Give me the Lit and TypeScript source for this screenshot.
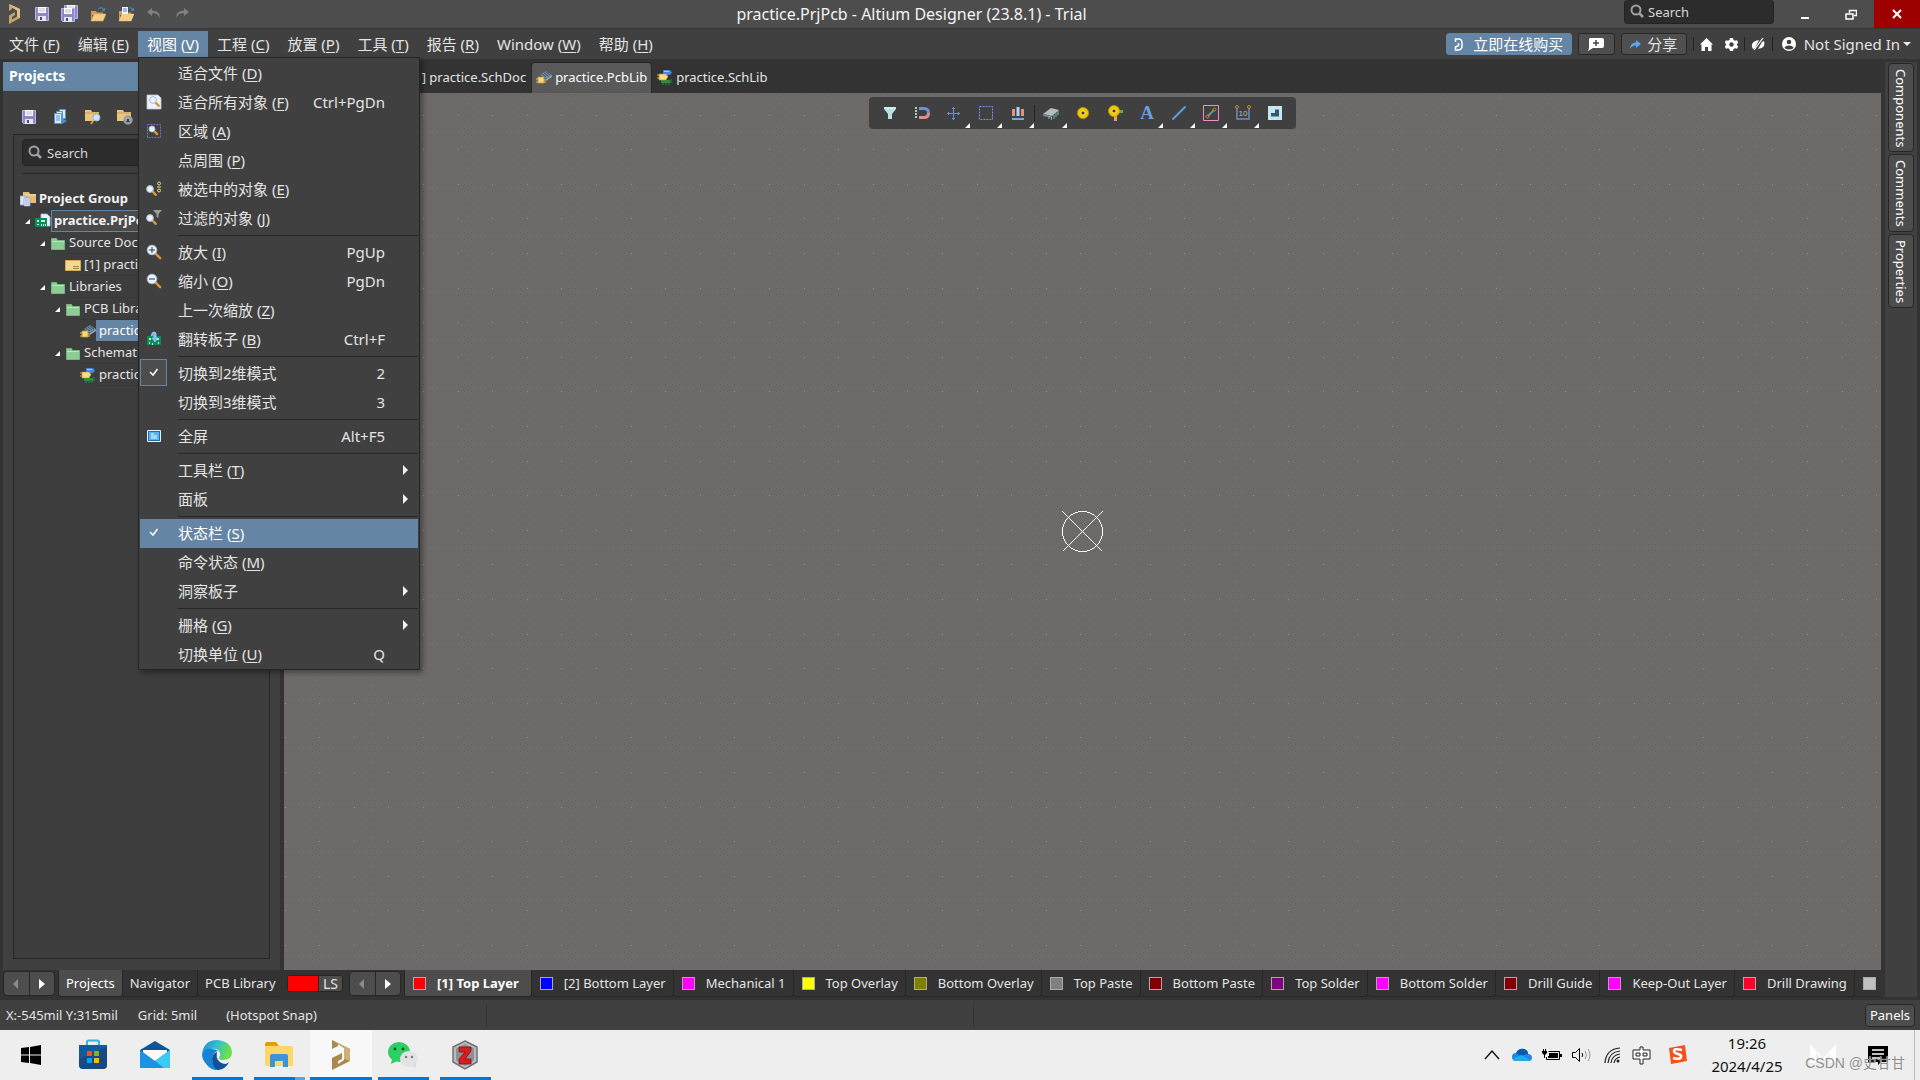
import { LitElement, html, css, svg, nothing, TemplateResult } from "lit";
import { customElement } from "lit/decorators.js";
import { classMap } from "lit/directives/class-map.js";
import { styleMap } from "lit/directives/style-map.js";

type Drawing = TemplateResult<2>;

const icon = (body: Drawing, w = 16, h = 16, box = `0 0 ${w} ${h}`) =>
  html`<svg width=${w} height=${h} viewBox=${box} aria-hidden="true">${body}</svg>`;

const lens = (x: number, y: number, r: number) => svg`
  <path d="M${x + r * 0.7} ${y + r * 0.7}l${r} ${r}" stroke="#d9963a" stroke-width="2.4" stroke-linecap="round"/>
  <circle cx=${x} cy=${y} r=${r} fill="#e9f4fd" stroke="#a9bccf" stroke-width="1"/>`;

const disk = (x: number, y: number) => svg`
  <g transform="translate(${x} ${y})">
    <path d="M.5 .5h13v13h-12l-1-1z" fill="#8d88c9" stroke="#b9b6e4"/>
    <path d="M3 0h8v6H3z" fill="#fff"/>
    <path d="M4 2h6M4 4h6" stroke="#b8bcc8"/>
    <path d="M3 9h8v5H3z" fill="#e6e6f4"/><path d="M5 10h2v3H5z" fill="#4b4787"/>
  </g>`;

const folder = svg`<path d="M1.500 3.500h5l1 2h7v9h-13z" fill="#8fcb94" stroke="#74b57a"/><path d="M2 6.500h12" stroke="#b9e6bc"/>`;
const openFolder = svg`
  <path d="M1 5h5l1 1.500h6V9H1z" fill="#c9a060"/><path d="M1 15V5h1v10z" fill="#c9a060"/>
  <path d="M4 8h12l-3 7H1z" fill="#f4cd85" stroke="#d8ac62" stroke-width=".6"/>`;
const closedFolder = svg`<path d="M0 1h6l1 2h7v9H0z" fill="#eac57f"/><path d="M0 4h14" stroke="#c99f56"/>`;

const goldMark = svg`
  <path d="M2 1v7l3-2V4.500l5 3v6l-5 3V14l3-2V9L2 12.500V21l11-6V6z" fill="#c3a469"/>
  <path d="M2 1l11 5v9L10 13.500v-6L5 4.500z" fill="#d9c08c"/>`;

const pcbLib = svg`
  <path d="M4 6l6-4 6 4-6 4z" fill="#6f8aa3"/><path d="M4 6l6 4v2L4 8z" fill="#40566a"/><path d="M10 10l6-4v2l-6 4z" fill="#8aa2b8"/>
  <path d="M6 5l4 3M8 4l4 3M10 3l4 3" stroke="#34485a" stroke-width=".8"/>
  <path d="M2 8h6v6H2z" fill="#f6d77a" stroke="#c29a32" stroke-width=".8"/>
  <path d="M0 10h2M0 13h2M8 11h2M8 13h2" stroke="#e3bd4e"/>`;
const schLib = svg`
  <path d="M6 1h7l2 2.500L13 6H6z" fill="#3f86e8"/><path d="M7 2h5v1H7z" fill="#a9ccff"/>
  <path d="M4 11h9v3H4z" fill="#2e8b3d"/><path d="M6 13v3M9 13v3M12 13v3M13 11h2M13 13h2" stroke="#2e8b3d"/>
  <path d="M2 5h7l2 2.500L9 11H2z" fill="#f9dc86" stroke="#b98f2c" stroke-width=".6"/>
  <path d="M0 6h2M0 9h2" stroke="#dba63a"/>`;
const schDoc = svg`<path d="M.5 3.500h15v10H.5z" fill="#f2d98b" stroke="#cfae57"/><path d="M8 9h6v1H8zM8 11h6v1H8z" fill="#a5853c"/>`;
const project = svg`
  <path d="M6 1h6l3 3v9H6z" fill="#eef1fb" stroke="#b5bbd6" stroke-width=".8"/>
  <path d="M0 5h12v9H0z" fill="#0f8a5c"/>
  <path d="M2 7h2v2H2zM2 11h2v1H2zM6 7h4v2H6zM6 11h1v2H6zM8 11h1v2H8zM10 11h1v2h-1z" fill="#bff0d6"/>`;
const projectGroup = svg`
  <path d="M3 1h6l1 2h6v9H3z" fill="#e5bd76"/><path d="M3 4h13" stroke="#f6dca6"/>
  <path d="M0 5h6v9H0z" fill="#dfe6f8" stroke="#8e9cc8" stroke-width=".8"/>
  <path d="M4 7h6v8H4z" fill="#f2f5ff" stroke="#8e9cc8" stroke-width=".8"/>
  <path d="M5 9h4M5 11h4M5 13h4" stroke="#7f90c4" stroke-width=".8"/>`;

const quickIcons: [string, unknown][] = [
  ["Altium", icon(goldMark, 15, 22)],
  ["Save", icon(disk(1, 1))],
  ["Save All", icon(svg`${disk(3, 0)}${disk(0, 3)}`, 18, 18)],
  ["Open", icon(svg`${openFolder}<path d="M8 3q4-3 6 1m1-2l-1 3-2-1" fill="none" stroke="#4a90c8"/>`)],
  ["Open Project", icon(svg`${openFolder}<path d="M4 1h6v7H4z" fill="#f1f5ff"/><path d="M5 3h4M5 5h4" stroke="#5a74b5"/><path d="M11 2q3-1 4 2m1-2l-1 3-2-1" fill="none" stroke="#4a90c8"/><path d="M4 8h12l-3 7H1z" fill="#f4cd85"/>`)],
  ["Undo", icon(svg`<path d="M6 2L1 6l5 4V7.500q6-1 7.500 5Q15 5 6 4.500z" fill="#808080"/>`)],
  ["Redo", icon(svg`<path d="M10 2l5 4-5 4V7.500q-6-1-7.500 5Q1 5 10 4.500z" fill="#808080"/>`)],
];

interface Entry { text?: string; key?: string; short?: string; icon?: unknown; check?: boolean; boxed?: boolean; sub?: boolean; hot?: boolean }

const viewMenu: Entry[][] = [
  [
    { text: "适合文件", key: "D" },
    { text: "适合所有对象", key: "F", short: "Ctrl+PgDn", icon: icon(svg`<path d="M1 1h11l3 3v11H1z" fill="#eef3fb" stroke="#b8c4dd" stroke-width=".8"/>${lens(7, 6, 3.4)}`) },
    { text: "区域", key: "A", icon: icon(svg`<path d="M1.500 1.500h13v13h-13z" fill="none" stroke="#6c78c8" stroke-dasharray="2 1"/>${lens(6, 6, 3)}`) },
    { text: "点周围", key: "P" },
    { text: "被选中的对象", key: "E", icon: icon(svg`${lens(4, 8, 3.4)}<g fill="none" stroke="#e6e37a"><circle cx="13" cy="2.500" r="1.500"/><circle cx="13" cy="9.500" r="1.500"/><path d="M11 6h4"/></g>`) },
    { text: "过滤的对象", key: "J", icon: icon(svg`${lens(4, 8, 3.4)}<path d="M7 0h9l-3.500 4v4l-2-1V4z" fill="#9b9b9b"/>`) },
  ],
  [
    { text: "放大", key: "I", short: "PgUp", icon: icon(svg`${lens(6, 6, 4.8)}<path d="M3 6h6M6 3v6" stroke="#333"/>`) },
    { text: "缩小", key: "O", short: "PgDn", icon: icon(svg`${lens(6, 6, 4.8)}<path d="M3 6h6" stroke="#333"/>`) },
    { text: "上一次缩放", key: "Z" },
    { text: "翻转板子", key: "B", short: "Ctrl+F", icon: icon(svg`<path d="M1 5h14v9H1z" fill="#0f8a5c"/><path d="M3 7h2v2H3zM11 7h2v2h-2zM3 11h1v2H3zM6 12h1v2H6zM12 11h1v2h-1z" fill="#bff0d6"/><path d="M5 5q1-5 4-4 2 1 1 6h2l-3 4-3-4h2q0-4-3-2z" fill="#7db8f0" stroke="#c3e0ff" stroke-width=".5"/>`) },
  ],
  [{ text: "切换到2维模式", short: "2", check: true, boxed: true }, { text: "切换到3维模式", short: "3" }],
  [{ text: "全屏", short: "Alt+F5", icon: icon(svg`<rect x="1" y="2" width="14" height="12" rx="1" fill="#e8f2fa"/><rect x="2.500" y="3.500" width="11" height="9" fill="#58b4f0" stroke="#1f6fb0"/><path d="M5 6h3M5 8h6M5 10h6" stroke="#e8f6ff"/>`) }],
  [{ text: "工具栏", key: "T", sub: true }, { text: "面板", sub: true }],
  [{ text: "状态栏", key: "S", check: true, hot: true }, { text: "命令状态", key: "M" }, { text: "洞察板子", sub: true }],
  [{ text: "栅格", key: "G", sub: true }, { text: "切换单位", key: "U", short: "Q" }],
];

const menuBar: [string, string][] = [
  ["文件", "F"], ["编辑", "E"], ["视图", "V"], ["工程", "C"], ["放置", "P"],
  ["工具", "T"], ["报告", "R"], ["Window", "W"], ["帮助", "H"],
];

interface Node { level: number; label: string; art: Drawing; open?: boolean; state?: string }
const tree: Node[] = [
  { level: 0, label: "Project Group", art: projectGroup, state: "strong" },
  { level: 1, label: "practice.PrjPcb", art: project, open: true, state: "strong focus" },
  { level: 2, label: "Source Documents", art: folder, open: true },
  { level: 3, label: "[1] practice.SchDoc", art: schDoc },
  { level: 2, label: "Libraries", art: folder, open: true },
  { level: 3, label: "PCB Library Documents", art: folder, open: true },
  { level: 4, label: "practice.PcbLib", art: pcbLib, state: "picked" },
  { level: 3, label: "Schematic Library Documents", art: folder, open: true },
  { level: 4, label: "practice.SchLib", art: schLib },
];

const layers: [string, string][] = [
  ["[1] Top Layer", "#ff0000"], ["[2] Bottom Layer", "#0000ff"], ["Mechanical 1", "#ff00ff"],
  ["Top Overlay", "#ffff00"], ["Bottom Overlay", "#808000"], ["Top Paste", "#808080"],
  ["Bottom Paste", "#800000"], ["Top Solder", "#800080"], ["Bottom Solder", "#ff00ff"],
  ["Drill Guide", "#800000"], ["Keep-Out Layer", "#ff00ff"], ["Drill Drawing", "#ff002a"], ["", "#c0c0c0"],
];

const ring = (x: number, y: number) => svg`<circle cx=${x} cy=${y} r="5.500" fill="#f2c800" stroke="#c79a00" stroke-width=".8"/><circle cx=${x} cy=${y} r="2" fill="#3a3a2a" stroke="#fff3a0" stroke-width=".8"/>`;
const activeTools: ([string, unknown, boolean] | null)[] = [
  ["Filter", icon(svg`<path d="M2 2h12v2L10 9v5H6V9L2 4z" fill="#b9dfe6"/><path d="M3 3h10" stroke="#e5f7fa"/>`), false],
  ["Snapping", icon(svg`<path d="M5 3.500h5q4.500 0 4.500 4.500" fill="none" stroke="#6e8fdc" stroke-width="3"/><path d="M14.500 8q0 4.500-4.500 4.500H5" fill="none" stroke="#ea8a90" stroke-width="3"/><path d="M1 3h2M1 6h2M1 9h2M1 12h2" stroke="#a9cdd4" stroke-width="2"/>`), false],
  ["Move", icon(svg`<path d="M7.500 2v13M1 8.500h13" stroke="#6b8ae0"/><path d="M6 3.500h3M6 13.500h3M2.500 7v3M12.500 7v3" stroke="#6b8ae0"/>`), true],
  ["Select", icon(svg`<path d="M1.500 1.500h13v13h-13z" fill="none" stroke="#7390ee" stroke-dasharray="2 1"/>`), true],
  ["Align", icon(svg`<path d="M2 4h3v7H2zM11 4h3v7h-3z" fill="#ee8a8a"/><path d="M6.500 2h3v9h-3z" fill="#a8d8f4"/><path d="M2 13h12v2H2z" fill="#7fa6dc"/>`), true],
  null,
  ["Component", icon(svg`<path d="M0 9l8-6 8 2-7 6z" fill="#b5bcc0"/><path d="M0 9l9 2v2l-9-2z" fill="#7d8488"/><path d="M6 11v3M8.500 12v3M11 10v4M13 8v4M15 6v4" stroke="#7fb6c4"/>`), true],
  ["Pad", icon(ring(8, 8)), false],
  ["Via", icon(svg`<path d="M7 11h3v5H7z" fill="#e8a05a"/><path d="M11 5h5v3h-5z" fill="#4fb53e"/>${ring(7, 6)}`), false],
  ["String", html`<span class="letter">A</span>`, true],
  ["Line", icon(svg`<path d="M2 14L14 2" stroke="#5e9ce0" stroke-width="2" stroke-linecap="round"/>`), true],
  ["Rules", icon(svg`<path d="M.5 .5h15v15H.5z" fill="none" stroke="#f08ad4"/><path d="M5 11l6-6" stroke="#6f86b8" stroke-width="2"/><g fill="none" stroke="#c88a1e"><circle cx="4.500" cy="11.500" r="1.500"/><circle cx="11.500" cy="4.500" r="1.500"/></g>`), true],
  ["Dimension", icon(svg`<path d="M2 3v11h12V3" fill="none" stroke="#6a8bc8" stroke-width="1.500"/><g fill="none" stroke="#c88a1e"><circle cx="2" cy="2" r="1.500"/><circle cx="14" cy="2" r="1.500"/></g><text x="8" y="11" text-anchor="middle" font-family="Liberation Sans, sans-serif" font-size="8" fill="#bbb">10</text>`), true],
  ["Polygon", icon(svg`<path d="M1 1h14v14H1z" fill="#c5e6f2"/><path d="M4 4.500h8v7H4z" fill="#35586c"/><path d="M4 4h4v4H4z" fill="#c5e6f2"/>`), false],
];

const taskIcons: [string, string, unknown][] = [
  ["Start", "", icon(svg`<path d="M0 3l8-1v7.500H0zM9 1.900L20 0v9.500H9zM0 10.500h8V18l-8-1zM9 10.500h11V20L9 18.100z" fill="#000"/>`, 20, 20)],
  ["Store", "", icon(svg`<path d="M9 6V3q0-1.500 1.500-1.500h9Q21 1.500 21 3v3" fill="none" stroke="#2fb4ee" stroke-width="2"/><path d="M1 6h28v20q0 4-4 4H5q-4 0-4-4z" fill="#135a9c"/><path d="M1 20l28-12v18q0 4-4 4H5q-4 0-4-4z" fill="#1d3d6e" opacity=".55"/><path d="M9 12h5v5H9z" fill="#f25022"/><path d="M16 12h5v5h-5z" fill="#7fba00"/><path d="M9 19h5v5H9z" fill="#00a4ef"/><path d="M16 19h5v5h-5z" fill="#ffb900"/>`, 30, 32)],
  ["Mail", "", icon(svg`<path d="M0 10L15 1l15 9v4H0z" fill="#0f5697"/><path d="M3 10h24v10H3z" fill="#fafafa"/><path d="M0 10l15 11L30 10v18H0z" fill="#1b93e0"/><path d="M30 10L15 21l9 7h6z" fill="#3ccaf4"/>`, 30, 30)],
  ["Edge", "run", icon(svg`
    <defs><linearGradient id="e1" x1="0" y1="0" x2="1" y2=".3"><stop offset="0" stop-color="#1b86d6"/><stop offset=".5" stop-color="#2fbfd0"/><stop offset="1" stop-color="#6ee04a"/></linearGradient></defs>
    <path d="M0 14Q2 0 15 0q14 1 15 12 0 8-9 8-4 0-4-2 2-3 1-5-2-5-8-4Q3 9 0 14z" fill="url(#e1)"/>
    <path d="M0 14q3-6 9-5 5 0 7 2-5 1-6 7 0 8 8 12-8 1-13-5-5-5-5-11z" fill="#1583d6"/>
    <path d="M10 18q1-5 5-6-1 5 1 8 3 4 8 4l3-2q-3 7-11 8-6-3-6-12z" fill="#12519a"/>`, 30, 30)],
  ["Explorer", "run more", icon(svg`<path d="M0 2q0-2 2-2h9l3 4H0z" fill="#e0a000"/><path d="M0 4h26q2 0 2 2v18H2q-2 0-2-2z" fill="#ffd766"/><path d="M5 14q0-2 2-2h14q2 0 2 2v11h-5v-6h-8v6H5z" fill="#3f92d8"/>`, 28, 26)],
  ["Altium Designer", "run front", icon(svg`<path d="M1 0v9l6-3V4l6 4v12l-6 4v-3l4-2v-6L1 18v12l18-9V9z" fill="#a8894e"/><path d="M1 0l18 9v12l-6-2V8L7 4z" fill="#cdb078"/>`, 20, 30)],
  ["WeChat", "run", icon(svg`<ellipse cx="11" cy="10" rx="11" ry="10" fill="#2bcf62"/><path d="M4 17l-1 5 6-3z" fill="#2bcf62"/><circle cx="7" cy="7" r="1.400" fill="#14532b"/><circle cx="15" cy="7" r="1.400" fill="#14532b"/><ellipse cx="21" cy="17" rx="9" ry="8" fill="#e3e3e4"/><path d="M24 23l4 3v-5z" fill="#dadada"/><circle cx="18" cy="15" r="1.200" fill="#777"/><circle cx="24" cy="15" r="1.200" fill="#777"/>`, 30, 27)],
  ["Z", "run", icon(svg`<path d="M13 1l12 6v15l-12 7-12-7V7z" fill="#b9bcbe" stroke="#6d7275" stroke-width="1.500"/><path d="M13 4l9 4.500v12L13 26l-9-5.500v-12z" fill="#8c9193"/><path d="M7 7h12v4l-6 8h6v5H7v-5l6-7H7z" fill="#d61e1e" stroke="#8b0d0d" stroke-width=".8"/>`, 26, 30)],
];

const trayIcons: [string, unknown][] = [
  ["Show hidden icons", icon(svg`<path d="M1 12l7-8 7 8" fill="none" stroke="#111" stroke-width="1.400"/>`)],
  ["OneDrive", icon(svg`<path d="M4 13q-4 0-4-4 0-4 4-4 3-5 8-4 4 1 4 5 4 0 4 4 0 3-4 3z" fill="#1b8ce0"/><path d="M4 5q3-5 8-4 4 1 4 5l-8 2z" fill="#0a5bb0"/><path d="M1 11l8-4 9 5-2 1H4z" fill="#28a8ea"/>`, 20, 14)],
  ["Battery", icon(svg`<path d="M6.500 3.500h11v8h-13V9" fill="none" stroke="#000"/><path d="M7 5h9v5H6V8h1zM18 6h2v3h-2zM0 3h5v2L3 7v3H2V7L0 5zM1 1h1v2H1zM3 1h1v2H3z" fill="#000"/>`, 20, 14)],
  ["Volume", icon(svg`<path d="M.5 5.500h3l4-4v13l-4-4h-3z" fill="none" stroke="#000"/><path d="M10 6q1.500 2 0 4" fill="none" stroke="#000"/><path d="M13 4q3 4 0 8M16 2q4 6 0 12" fill="none" stroke="#999"/>`, 20, 16)],
  ["Network", icon(svg`<g fill="none" stroke="#222" stroke-width="1.200"><path d="M1 16Q2 2 16 1M4 16Q5 5 16 4M7 16Q8 8 16 7M10 16q1-5 6-6"/></g><circle cx="14" cy="14" r="1.500" fill="#222"/>`, 17, 17)],
  ["Input method", icon(svg`<path d="M8 1h3v3h7v9h-7v5H8v-5H1V4h7z" fill="#fff" stroke="#222"/><path d="M4 7h4v3H4zM11 7h4v3h-4z" fill="#eee" stroke="#222"/>`, 21, 19)],
];

/* One repeat of the grid: 25 fine steps, every fifth one bright. */
const TILE = 173;
const STEPS = 25;
const dots = (major: boolean) => {
  let d = "";
  for (let i = 0; i < STEPS; i++)
    for (let j = 0; j < STEPS; j++)
      if ((i % 5 === 0 && j % 5 === 0) === major)
        d += `M${Math.floor((i * TILE) / STEPS)} ${Math.floor((j * TILE) / STEPS)}h1v1h-1z`;
  return d;
};

@customElement("app-root")
export class AppRoot extends LitElement {
  static styles = css`
    :host { display: block; font-family: "Noto Sans", "Noto Sans CJK SC", sans-serif; font-size: 13px; line-height: 20px; color: #e4e4e4; }
    * { box-sizing: border-box; }
    button, input { font: inherit; color: inherit; border: 0; background: none; padding: 0; margin: 0; }
    button { display: flex; align-items: center; justify-content: center; white-space: nowrap; }
    svg { display: block; flex: none; }
    a { color: inherit; text-decoration: none; }
    .window { min-height: 100vh; display: flex; flex-direction: column; background: #333; }

    .titlebar { height: 29px; display: flex; background: #4d4d4d; border-bottom: 1px solid #363636; }
    .quick { display: flex; padding: 0 3px 0 0; }
    .quick button { width: 28px; }
    .title { flex: 1; margin: 0; text-align: center; font-size: 16px; font-weight: 400; line-height: 28px; color: #f4f4f4; }
    .find { display: flex; align-items: center; gap: 3px; background: #2c2c2c; border: 1px solid #232323; border-radius: 4px; }
    .find input { flex: 1; min-width: 0; outline: 0; }
    .find input::placeholder { color: #d8d8d8; opacity: 1; }
    .titlebar .find { width: 150px; height: 24px; padding: 0 5px; border-top: 0; margin-right: 8px; }
    .titlebar .win { width: 46px; height: 28px; }
    .titlebar .close { background: #9e0000; }

    .menubar { height: 30px; display: flex; align-items: center; background: #404040; font-size: 15px; padding-right: 9px; }
    .menus { display: flex; flex: 1; }
    .menu { position: relative; }
    .menu > button { height: 26px; padding: 0 9px; }
    .menu.on > button { background: #6485a4; color: #fff; }
    u { text-underline-offset: 2px; text-decoration-thickness: 1px; }
    .dropdown { position: absolute; z-index: 5; top: 26px; left: 0; width: 282px; background: #404040; border: 1px solid #262626; padding: 1px 1px 0; box-shadow: 3px 3px 5px rgba(0, 0, 0, .35); }
    .group + .group { padding-top: 5px; background: linear-gradient(#262626, #262626) 38px 2px / 100% 1px no-repeat; }
    .entry { display: flex; width: 100%; height: 29px; padding-bottom: 2px; justify-content: flex-start; }
    .entry.hot { background: #6485a4; color: #fff; }
    .mark { width: 27px; height: 27px; margin-right: 11px; display: flex; align-items: center; justify-content: center; border: 1px solid transparent; }
    .mark.boxed { border-color: #6485a4; background: #4d4d4d; }
    .entry .text { flex: 1; text-align: left; }
    .entry .short { padding-right: 33px; }
    .entry .arrow { padding-right: 9px; }

    .account { display: flex; align-items: center; }
    .chip { height: 22px; border-radius: 3px; border: 1px solid #262626; background: #4f4f4f; margin-right: 6px; gap: 6px; }
    .buy { width: 126px; background: #6485a4; border-color: #6485a4; color: #fff; gap: 9px; }
    .note { width: 37px; }
    .share { width: 66px; }
    .bar { width: 1px; height: 14px; background: #222; }
    .tool { display: flex; align-items: center; justify-content: center; width: 25px; height: 22px; }
    .tool.wide { width: 27px; }
    .user { gap: 8px; padding-left: 9px; }
    .user .down { margin-left: -5px; }

    .work { flex: 1; display: grid; grid-template-columns: 277px minmax(0, 1fr) 32px; column-gap: 4px; padding: 3px 3px 0 3px; }
    .panel { background: #404040; display: flex; flex-direction: column; min-width: 0; overflow: hidden; }
    .panel h2 { margin: 0; padding-left: 6px; height: 29px; background: #6485a4; color: #fff; font-size: 14px; line-height: 28px; }
    .tools { display: flex; height: 43px; padding: 10px 0 0 10px; }
    .tools button { width: 32px; height: 32px; }
    .tree { flex: 1; margin: 0 10px 11px 10px; border: 1px solid #262626; background: #3d3d3d; padding: 4px 8px; }
    .tree .find { height: 27px; padding: 0 5px; gap: 4px; margin-bottom: 7px; }
    .rule { height: 1px; background: #262626; margin-bottom: 14px; }
    .tree ul { list-style: none; margin: 0 -8px 0 -2px; padding: 0; }
    .tree li { display: flex; align-items: center; height: 22px; white-space: nowrap; }
    .caret { width: 15px; display: flex; justify-content: center; }
    .leaf { flex: 1; height: 22px; padding: 0 3px; border-bottom: 1px solid #383838; }
    .strong { font-weight: 700; color: #f2f2f2; }
    .focus { border: 1px solid #6485a4; background: #4a4a4a; line-height: 18px; padding: 0 2px; }
    .picked { background: #6485a4; color: #fff; }
    .i2 { width: 15px; }
    .i3 { width: 30px; }
    .i4 { width: 45px; }
    .top { margin-left: -15px; }

    .editor { display: flex; flex-direction: column; min-width: 0; }
    .docs { display: flex; height: 31px; padding-left: 102px; }
    .doc { gap: 3px; padding: 0 4px 2px; border: 1px solid transparent; border-bottom: 0; border-radius: 4px 4px 0 0; }
    .doc.on { background: #595959; border-color: #262626; color: #fff; }
    .canvas { flex: 1; position: relative; background: #6e6a69; display: flex; flex-direction: column; align-items: center; padding-top: 4px; }
    .grid { position: absolute; inset: 0; width: 100%; height: 100%; }
    .origin { position: absolute; inset: 0; margin: auto; }
    .active { position: relative; display: flex; align-items: center; height: 32px; padding: 0 5px; background: #404040; border-radius: 4px; }
    .active button { position: relative; width: 32px; height: 32px; }
    .active .more::after { content: ""; position: absolute; right: 0; bottom: 1px; border: solid transparent; border-width: 0 0 5px 5px; border-bottom-color: #fff; }
    .active .bar { height: 16px; }
    .letter { font-family: "Liberation Serif", serif; font-weight: 700; font-size: 19px; line-height: 24px; color: #6aa0dc; }

    .rail { background: #404040; display: flex; flex-direction: column; align-items: center; gap: 2px; padding-top: 1px; }
    .rail button { writing-mode: vertical-rl; width: 26px; padding: 5px 0 4px; border: 1px solid #262626; border-radius: 4px; background: #4d4d4d; color: #fff; }

    .strip { display: grid; grid-template-columns: 277px minmax(0, 1fr) 32px; column-gap: 4px; padding: 0 3px; height: 30px; }
    .strip .end { background: #404040; margin-bottom: 3px; }
    .set { display: flex; align-items: flex-start; overflow: hidden; }
    .pair { display: flex; flex: none; width: 52px; height: 25px; margin: 1px 3px 0 0; background: #4d4d4d; border: 1px solid #262626; border-radius: 4px; }
    .pair button { flex: 1; }
    .pair button + button { border-left: 1px solid #262626; }
    .tab { flex: none; height: 27px; padding: 0 7px; border: 1px solid #262626; border-top: 0; border-left-width: 0; border-radius: 0 0 3px 3px; }
    .tab.on { background: #4d4d4d; color: #fff; border-left-width: 1px; }
    .layer { gap: 11px; padding: 0 7px 0 8px; }
    .layer.on { font-weight: 700; padding-right: 12px; }
    .swatch { width: 13px; height: 13px; border: 1px solid #aaa; }
    .current { display: flex; flex: none; width: 56px; height: 17px; margin: 5px 6px 0 3px; border: 1px solid #262626; border-radius: 3px; background: #4d4d4d; }
    .current i { width: 31px; background: #f00; border-right: 1px solid #262626; }
    .current button { flex: 1; font-size: 14px; }

    .status { height: 30px; display: flex; align-items: center; background: #404040; padding: 0 5px 0 0; }
    .status span { margin-right: 20px; }
    .status .snap { margin-left: 9px; }
    .fill { flex: 1; }
    .cell { width: 487px; height: 24px; display: flex; align-items: center; border-right: 1px solid #333; padding-left: 6px; }
    .panels { width: 50px; height: 23px; border: 1px solid #262626; border-radius: 4px; background: #4d4d4d; color: #fff; }

    .taskbar { position: relative; height: 50px; display: flex; background: #eee; color: #111; }
    .app { position: relative; width: 62px; }
    .app.front { background: #f8f8f8; }
    .app.run::after { content: ""; position: absolute; left: 6px; right: 5px; bottom: 0; height: 3px; background: #0078d7; }
    .app.front::after { left: 0; right: 0; }
    .app.more::after { background: linear-gradient(90deg, #0078d7 41px, #5aa7e6 41px); }
    .tray { margin-left: auto; display: flex; margin-right: 5px; padding-right: 7px; border-right: 1px solid #bbb; }
    .tray button { width: 30px; }
    .tray .sogou { width: 40px; }
    .tray .clock { width: 100px; flex-direction: column; line-height: 23px; font-size: 15px; }
    .tray .maker { width: 52px; padding-bottom: 2px; }
    .tray .news { width: 58px; }
    .watermark { position: absolute; right: 15px; bottom: 6px; font-family: "Liberation Sans", "Noto Sans CJK SC", sans-serif; font-size: 14px; line-height: 22px; color: #8d8d8d; text-shadow: 0 0 1px #fff; }
  `;

  private label(text: string, key?: string) {
    return html`${text}${key ? html` (<u>${key}</u>)` : nothing}`;
  }

  private search(id: string) {
    return html`<label class="find" for=${id}>
      ${icon(svg`<circle cx="6" cy="6" r="4.500" fill="none" stroke="#a0a0a0" stroke-width="2"/><path d="M9.500 9.500L13 13" stroke="#a0a0a0" stroke-width="2.500"/>`, 15, 15)}
      <input id=${id} type="text" placeholder="Search" aria-label="Search" />
    </label>`;
  }

  private entry(e: Entry) {
    return html`<button class=${classMap({ entry: true, hot: !!e.hot })} role="menuitem">
      <span class=${classMap({ mark: true, boxed: !!e.boxed })}>
        ${e.check ? icon(svg`<path d="M1 4l3 3 4.500-6" fill="none" stroke="#fff" stroke-width="1.500"/>`, 10, 9) : e.icon ?? nothing}
      </span>
      <span class="text">${this.label(e.text ?? "", e.key)}</span>
      ${e.short ? html`<span class="short">${e.short}</span>` : nothing}
      ${e.sub ? html`<span class="arrow">${icon(svg`<path d="M0 0l5 5-5 5z" fill="#f2f2f2"/>`, 6, 10)}</span>` : nothing}
    </button>`;
  }

  private pair() {
    return html`<div class="pair">
      <button aria-label="Previous">${icon(svg`<path d="M5 0v10L0 5z" fill="#8a8a8a"/>`, 6, 10)}</button>
      <button aria-label="Next">${icon(svg`<path d="M0 0l6 5-6 5z" fill="#fff"/>`, 6, 10)}</button>
    </div>`;
  }

  private header() {
    return html`
      <header class="titlebar">
        <div class="quick">${quickIcons.map(([name, art]) => html`<button aria-label=${name}>${art}</button>`)}</div>
        <h1 class="title">practice.PrjPcb - Altium Designer (23.8.1) - Trial</h1>
        ${this.search("find-all")}
        <button class="win" aria-label="Minimize">${icon(svg`<path d="M0 9h8v2H0z" fill="#fff"/>`, 9, 12)}</button>
        <button class="win" aria-label="Restore">${icon(svg`<path d="M4.500 4V1.500h7v5H9" fill="none" stroke="#fff" stroke-width="1.500"/><path d="M1 5h7v5H1z" fill="none" stroke="#fff" stroke-width="1.500"/>`, 12, 11)}</button>
        <button class="win close" aria-label="Close">${icon(svg`<path d="M1 1l8 8M9 1L1 9" stroke="#fff" stroke-width="2"/>`, 10, 10)}</button>
      </header>
      <nav class="menubar">
        <div class="menus">
          ${menuBar.map(([text, key]) => html`<div class=${classMap({ menu: true, on: key === "V" })}>
            <button aria-haspopup="menu"><span>${this.label(text, key)}</span></button>
            ${key === "V" ? html`<div class="dropdown" role="menu">
              ${viewMenu.map((g) => html`<div class="group" role="group">${g.map((e) => this.entry(e))}</div>`)}
            </div>` : nothing}
          </div>`)}
        </div>
        <div class="account">
          <button class="chip buy">${icon(svg`<path d="M1.500 4V1h3q3.500 0 3.500 4v3q0 4-4 4H1.500V9l3-1.500V5" fill="none" stroke="#fff" stroke-width="1.500"/>`, 10, 13)}立即在线购买</button>
          <button class="chip note" aria-label="Feedback">${icon(svg`<path d="M2 1h12q2 0 2 2v6q0 2-2 2H5l-5 3 1-3V3q0-2 1-2z" fill="#fff"/><path d="M5 6h6M8 3v6" stroke="#444" stroke-width="1.500"/>`, 16, 14)}</button>
          <button class="chip share">${icon(svg`<path d="M6 0l5 4-5 4V5.500Q2 5.500 0 9 0 3 6 2.500z" fill="#56a8f5"/>`, 11, 9)}分享</button>
          <span class="bar"></span>
          <a class="tool" href="#home" aria-label="Home">${icon(svg`<path d="M6.500 0L13 6.500h-1.500V13H8V9H5v4H1.500V6.500H0z" fill="#fff"/>`, 13, 13)}</a>
          <button class="tool" aria-label="Settings">${icon(svg`<path d="M5 0h3l.5 2 1.500.8 2-.6 1.200 2.300L12 6v1l1.200 1.500-1.200 2.300-2-.6-1.500.8L8 13H5l-.5-2-1.500-.8-2 .6L-.2 8.500 1 7V6L-.2 4.500 1 2.200l2 .6L4.500 2z" fill="#fff"/><circle cx="6.500" cy="6.500" r="2.200" fill="#404040"/>`, 13, 13)}</button>
          <span class="bar"></span>
          <button class="tool wide" aria-label="Notifications off">${icon(svg`<path d="M1 9q-1-6 7-7l-4 8-2 1zM13 3q2 7-6 8l4-7z" fill="#fff"/><path d="M3 12L12 0" stroke="#fff" stroke-width="1.200"/>`, 14, 13)}</button>
          <span class="bar"></span>
          <button class="user">
            ${icon(svg`<circle cx="7" cy="7" r="7" fill="#fff"/><circle cx="7" cy="5" r="2.300" fill="#404040"/><path d="M2.500 11q.5-2.500 4.500-2.500t4.500 2.500q-4 3-9 0z" fill="#404040"/>`, 14, 14)}
            Not Signed In
            <span class="down">${icon(svg`<path d="M0 0h8L4 4z" fill="#eee"/>`, 8, 4)}</span>
          </button>
        </div>
      </nav>`;
  }

  private sidePanel() {
    const small: [string, unknown][] = [
      ["Save", icon(disk(1, 1))],
      ["Copy documents", icon(svg`<g fill="#dceaf8" stroke="#5c93cc"><path d="M6.500 .5h6v9h-6z"/><path d="M3.500 2.500h6v10h-6z"/><path d="M1.500 4.500h7v10h-7z"/></g><path d="M3 7h4M3 9h4M3 11h4" stroke="#5c93cc"/><path d="M9 9l5 3-5 3z" fill="#4a90d8"/>`)],
      ["Explore", icon(svg`${closedFolder}<path d="M8 12l-2 3" stroke="#d9963a" stroke-width="2"/><circle cx="11.500" cy="8.500" r="3.500" fill="#cfe4f6" stroke="#9ab4cc"/>`)],
      ["Options", icon(svg`${closedFolder}<circle cx="11" cy="11" r="3.500" fill="none" stroke="#8fa0ac" stroke-width="2.500"/><circle cx="11" cy="11" r="1.500" fill="#35424c"/>`)],
    ];
    return html`<aside class="panel">
      <h2>Projects</h2>
      <div class="tools">${small.map(([name, art]) => html`<button aria-label=${name}>${art}</button>`)}</div>
      <div class="tree">
        ${this.search("find-project")}
        <div class="rule"></div>
        <ul>
          ${tree.map((n) => html`<li>
            <span class="i${n.level}"></span>
            <span class=${classMap({ caret: true, top: n.level === 0 })}>
              ${n.open ? icon(svg`<path d="M6 1v5H1z" fill="#fff"/>`, 7, 7) : nothing}
            </span>
            ${icon(n.art)}
            <span class="leaf ${n.state ?? ""}">${n.label}</span>
          </li>`)}
        </ul>
      </div>
    </aside>`;
  }

  private editor() {
    return html`<main class="editor">
      <div class="docs">
        <button class="doc">${icon(schDoc)}[1] practice.SchDoc</button>
        <button class="doc on">${icon(pcbLib)}practice.PcbLib</button>
        <button class="doc">${icon(schLib)}practice.SchLib</button>
      </div>
      <div class="canvas">
        <svg class="grid" aria-hidden="true">
          <defs>
            <pattern id="dots" x="1" y="22" width=${TILE} height=${TILE} patternUnits="userSpaceOnUse">
              <path d=${dots(false)} fill="#635f5e"></path>
              <path d=${dots(true)} fill="#969291"></path>
            </pattern>
          </defs>
          <rect width="100%" height="100%" fill="url(#dots)"></rect>
        </svg>
        <svg class="origin" width="41" height="41" viewBox="0 0 41 41" aria-hidden="true">
          <g fill="none" stroke="#fff" shape-rendering="crispEdges">
            <circle cx="20.5" cy="20.5" r="20"></circle>
            <path d="M.5 .5l40 40M40.5 .5l-40 40"></path>
          </g>
        </svg>
        <div class="active" role="toolbar">
          ${activeTools.map((t) => t
            ? html`<button class=${classMap({ more: t[2] })} aria-label=${t[0]}>${t[1]}</button>`
            : html`<span class="bar"></span>`)}
        </div>
      </div>
    </main>`;
  }

  render() {
    return html`<div class="window">
      ${this.header()}
      <div class="work">
        ${this.sidePanel()} ${this.editor()}
        <aside class="rail"><button>Components</button><button>Comments</button><button>Properties</button></aside>
      </div>
      <div class="strip">
        <div class="set">
          ${this.pair()}
          <button class="tab on">Projects</button><button class="tab">Navigator</button><button class="tab">PCB Library</button>
        </div>
        <div class="set">
          <div class="current"><i></i><button>LS</button></div>
          ${this.pair()}
          ${layers.map(([name, color], i) => html`<button class=${classMap({ tab: true, layer: true, on: i === 0 })} aria-label=${name || "More layers"}>
            <span class="swatch" style=${styleMap({ background: color })}></span>${name}
          </button>`)}
        </div>
        <div class="end"></div>
      </div>
      <footer class="status">
        <div class="cell"><span>X:-545mil Y:315mil</span><span>Grid: 5mil</span><span class="snap">(Hotspot Snap)</span></div>
        <div class="cell"></div>
        <div class="fill"></div>
        <button class="panels">Panels</button>
      </footer>
      <footer class="taskbar">
        ${taskIcons.map(([name, state, art]) => html`<button class="app ${state}" aria-label=${name}>${art}</button>`)}
        <div class="tray">
          ${trayIcons.map(([name, art]) => html`<button aria-label=${name}>${art}</button>`)}
          <button class="sogou" aria-label="Sogou">${icon(svg`<path d="M2 3L18 0l2 16-16 3z" fill="#f4511e"/><path d="M15 5q-8-2-8 1 0 2 4 3 4 1 3 3-1 3-8 1" fill="none" stroke="#fff" stroke-width="2.500"/>`, 21, 20)}</button>
          <button class="clock"><span>19:26</span><span>2024/4/25</span></button>
          <button class="maker" aria-label="Manager">${icon(svg`<path d="M0 0l8 9 5 5 5-5 8-9v19h-6V9l-7 8-7-8v10H0z" fill="#fff"/>`, 26, 20)}</button>
          <button class="news" aria-label="Notifications">${icon(svg`<path d="M0 0h20v16h-7l-3 3v-3H0z" fill="#000"/><path d="M4 4h12M4 8h12M4 12h8" stroke="#fff" stroke-width="1.500"/>`, 20, 19)}</button>
        </div>
        <span class="watermark">CSDN @史甘甘</span>
      </footer>
    </div>`;
  }
}
